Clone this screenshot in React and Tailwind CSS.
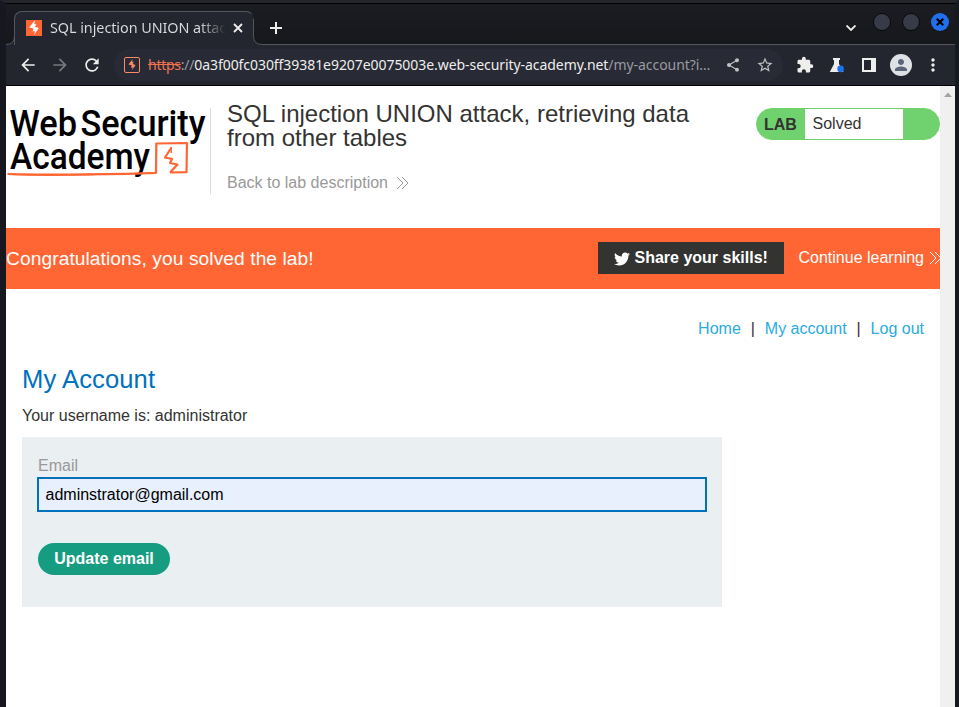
import React from "react";
import { MdArrowBack, MdArrowForward, MdRefresh, MdShare, MdStarBorder, MdExtension, MdMoreVert, MdPerson } from "react-icons/md";
import { FaTwitter } from "react-icons/fa";

function Bolt({ className }) {
  return (
    <svg viewBox="0 0 16 16" className={className} fill="currentColor">
      <path d="M8.8 0.2 L3.2 7.4 L7.6 8.4 L6.6 11.2 L9.2 11.6 L7.6 15.6 L12.8 8 L8.8 6.8 L10.4 4.6 L8.4 4 Z" />
    </svg>
  );
}

function Chevrons({ className }) {
  return (
    <svg viewBox="0 0 13 14" className={className} fill="none" stroke="currentColor" strokeWidth="1">
      <path d="M1 1 L7 7 L1 13 M6 1 L12 7 L6 13" />
    </svg>
  );
}

function WindowButton() {
  return <div className="h-[18px] w-[18px] rounded-full border border-[#08090c] bg-[#373b48]" />;
}

function TabStrip() {
  return (
    <div className="flex h-[42px] items-end border-t border-black bg-linear-to-b from-[#1c1d22] to-[#16171b] font-['Noto_Sans',sans-serif]">
      <svg viewBox="0 0 9 34" className="h-[34px] w-[9px] shrink-0 self-end">
        <path d="M0 33.5 Q8.5 33.5 8.5 25 H9 V34 H0 Z" fill="#24262f" />
        <path d="M0 33.5 Q8.5 33.5 8.5 25 V0" fill="none" stroke="#55575e" />
        <path d="M8.5 0 V8" stroke="#191a1f" />
      </svg>
      <div className="-ml-px flex h-[34px] w-[240px] shrink-0 items-center rounded-t-[8px] border border-b-0 border-[#55575e] bg-[#24262f] pr-[10px] pl-[11px] [border-right-color:transparent]">
        <div className="mb-px flex h-4 w-4 shrink-0 items-center justify-center bg-[#ff6633]">
          <Bolt className="h-4 w-4 text-white" />
        </div>
        <div className="mb-[1px] ml-2 w-[176px] overflow-hidden bg-linear-to-r from-[#dcdde0] from-85% to-transparent bg-clip-text text-[14.4px] leading-5 tracking-[-0.06px] whitespace-nowrap text-transparent">
          SQL injection UNION attack
        </div>
        <svg viewBox="0 0 10 10" className="mb-px ml-[7px] h-[10px] w-[10px] shrink-0 stroke-[#eeeeec]" strokeWidth="1.8">
          <path d="M1 1 L9 9 M9 1 L1 9" />
        </svg>
      </div>
      <svg viewBox="0 0 9 34" className="-ml-px h-[34px] w-[9px] shrink-0 self-end">
        <path d="M0 8 V34 H9 V33.5 Q0.5 33.5 0.5 25 Z" fill="#24262f" />
        <path d="M9 33.5 Q0.5 33.5 0.5 25 V8" fill="none" stroke="#55575e" />
      </svg>
      <div className="flex h-[41px] grow flex-col border-b border-[#55575e]">
        <div className="flex h-10 items-center pr-[6px]">
          <svg viewBox="0 0 12 12" className="mt-[8px] ml-[8px] h-3 w-3 stroke-[#eeeeec]" strokeWidth="2">
            <path d="M6 0 V12 M0 6 H12" />
          </svg>
          <svg viewBox="0 0 10 6" className="mt-[8px] mr-[17px] ml-auto h-[6px] w-[10px] fill-none stroke-[#eeeeec]" strokeWidth="1.8">
            <path d="M0.5 0.5 L5 5 L9.5 0.5" />
          </svg>
          <div className="mb-1 flex items-center gap-[11px]">
            <WindowButton />
            <WindowButton />
            <div className="flex h-[18px] w-[18px] items-center justify-center rounded-full bg-[#2070ee]">
              <svg viewBox="0 0 10 10" className="h-2 w-2 stroke-black" strokeWidth="2.8">
                <path d="M1 1 L9 9 M9 1 L1 9" />
              </svg>
            </div>
          </div>
        </div>
      </div>
    </div>
  );
}

function Toolbar() {
  return (
    <div className="flex h-[41px] items-center border-b border-black bg-[#24262f] pl-[12px] font-['Noto_Sans',sans-serif] text-[#eeeeec]">
      <MdArrowBack className="h-5 w-5 shrink-0" />
      <MdArrowForward className="ml-3 h-5 w-5 shrink-0 text-[#777980]" />
      <MdRefresh className="ml-3 h-5 w-5 shrink-0" />
      <div className="ml-3 flex h-8 w-[669px] shrink-0 items-center rounded-full bg-[#282a35] pl-[10px]">
        <div className="flex h-4 w-4 shrink-0 items-center justify-center rounded-[2px] border-[1.5px] border-[#ff8a65] text-[#ff8a65]">
          <Bolt className="h-3 w-3" />
        </div>
        <div className="mb-px ml-2 flex w-[564px] shrink-0 text-[14px] leading-5 tracking-[-0.06px] whitespace-nowrap">
          <span className="tracking-[-0.25px] text-[#f0734d] line-through">https</span>
          <span className="tracking-[-0.25px] text-[#999ba0]">://</span>
          <span className="text-[#eeeeec]">0a3f00fc030ff39381e9207e0075003e.web-security-academy.net</span>
          <span className="text-[#999ba0]">/my-account?i…</span>
        </div>
        <MdShare className="ml-[13px] h-4 w-4 shrink-0 text-[#c0c1c3]" />
        <MdStarBorder className="ml-[15px] h-[18px] w-[18px] shrink-0 text-[#c0c1c3]" />
      </div>
      <MdExtension className="ml-[13px] h-[18px] w-[18px] shrink-0" />
      <svg viewBox="0 0 16 16" className="ml-[15px] h-4 w-4 shrink-0">
        <path d="M4 1 H11 V3 H10 V7 L14.5 15 H0.8 L5 7 V3 H4 Z" fill="#eeeeec" />
        <circle cx="11.6" cy="11.9" r="3.3" fill="#1a73e8" />
      </svg>
      <svg viewBox="0 0 14 14" className="ml-[17px] h-[14px] w-[14px] shrink-0 fill-[#eeeeec]">
        <path d="M0 0 H14 V14 H0 Z M2 2 V12 H9 V2 Z" fillRule="evenodd" />
      </svg>
      <div className="ml-[14px] flex h-[22px] w-[22px] shrink-0 items-center justify-center rounded-full bg-[#dee1e6] text-[#5b6478]">
        <MdPerson className="h-[18px] w-[18px]" />
      </div>
      <MdMoreVert className="ml-[11px] h-5 w-5 shrink-0" />
    </div>
  );
}

function Logo() {
  return (
    <svg viewBox="0 0 204 86" className="h-[86px] w-[204px] shrink-0 overflow-visible">
      <g fontFamily="Roboto, sans-serif" fontWeight="500" fontSize="37.5" fill="#000">
        <text x="3.5" y="28.3" textLength="67.5" lengthAdjust="spacingAndGlyphs">Web</text>
        <text x="74.5" y="28.3" textLength="125" lengthAdjust="spacingAndGlyphs">Security</text>
        <text x="4" y="60.7" textLength="140" lengthAdjust="spacingAndGlyphs">Academy</text>
      </g>
      <g fill="none" stroke="#ff6633" strokeLinejoin="round">
        <path d="M1.5 66 Q35 66.8 80 66.3 T150 64.8 L150.3 35.5 L181 35 L180.5 64.2 L164 64.5" strokeWidth="2.2" />
        <path d="M2 66.2 Q40 68.3 88 66.5" strokeWidth="1.4" />
        <path d="M165.5 39.5 L159 49.5 L166 51 L164 55 L171.5 56.5 L164 64.5" strokeWidth="2.2" />
        <path d="M165.2 39 V45" strokeWidth="1.4" />
      </g>
    </svg>
  );
}

function LabHeader() {
  return (
    <header className="flex h-[142px] pt-[22px] text-[#333332]">
      <Logo />
      <div className="h-[86px] border-l border-[#dcdcdc] pl-4">
        <h2 className="-mt-[6px] w-[480px] text-[24px] leading-6">SQL injection UNION attack, retrieving data from other tables</h2>
        <a className="mt-[21px] flex items-center text-[16px] leading-6 text-[#999999]">
          Back to lab description
          <Chevrons className="mb-px ml-2 h-[14px] w-[13px]" />
        </a>
      </div>
      <div className="ml-auto flex h-8 w-[184px] overflow-hidden rounded-full border border-[#70d26f] bg-[#70d26f] text-[16px] leading-[30px]">
        <span className="w-[48px] pt-px pl-[7px] font-bold">LAB</span>
        <span className="w-[98px] bg-white pl-[7.5px]">Solved</span>
      </div>
    </header>
  );
}

function SolvedBanner() {
  return (
    <section className="flex h-[61px] items-center bg-[#ff6633] text-white">
      <h4 className="text-[19.2px] leading-6 tracking-[0.075px]">Congratulations, you solved the lab!</h4>
      <a className="mb-px ml-auto flex h-8 w-[186px] items-center bg-[#333332] pl-4 text-[16px] font-bold">
        <FaTwitter className="mt-[2px] mr-[4.5px] h-4 w-4" />
        Share your skills!
      </a>
      <a className="mb-[2px] flex w-[156px] items-center pl-[14.5px] text-[16px] whitespace-nowrap">
        Continue learning
        <Chevrons className="mt-px ml-[5px] h-[14px] w-[13px] shrink-0" />
      </a>
    </section>
  );
}

function Account() {
  return (
    <main className="px-4 pt-7 text-[16px] text-[#333332]">
      <nav className="flex h-6 items-center justify-end text-[#29abe2]">
        <a>Home</a>
        <span className="w-[24px] text-center text-[#3d2a30]">|</span>
        <a>My account</a>
        <span className="w-[24px] text-center text-[#3d2a30]">|</span>
        <a>Log out</a>
      </nav>
      <h1 className="mt-[22px] text-[25.6px] leading-8 tracking-[0.08px] text-[#0071bc]">My Account</h1>
      <p className="mt-[9px] leading-6">Your username is: administrator</p>
      <form className="mt-[9px] flex h-[170px] w-[700px] flex-col items-start bg-[#eaeff2] px-[15px] pt-[17px]">
        <label className="ml-px h-[23px] leading-6 text-[#999999]">Email</label>
        <div className="h-[35px] w-[670px] border-2 border-[#0071bc] bg-[#e8f0fe] pl-[6.5px] leading-[31px] text-black">adminstrator@gmail.com</div>
        <button type="button" className="mt-[31px] ml-px h-8 w-[132px] rounded-full bg-[#169c80] font-bold text-white">Update email</button>
      </form>
    </main>
  );
}

export default function App() {
  return (
    <div className="flex h-[707px] w-[959px] flex-col overflow-hidden border-t-[3px] border-r-4 border-l-[6px] border-t-[#24262c] border-r-[#151920] border-l-[#16171f]">
      <TabStrip />
      <Toolbar />
      <div className="flex min-h-0 grow bg-white font-['Liberation_Sans',Arial,sans-serif]">
        <div className="w-[934px] overflow-x-hidden">
          <LabHeader />
          <SolvedBanner />
          <Account />
        </div>
        <div className="flex w-[15px] justify-center bg-[#f0f0f0] pt-[6px]">
          <svg viewBox="0 0 8 5" className="h-[5px] w-[8px] fill-[#a3a3a3]">
            <path d="M0 5 L4 0.5 L8 5 Z" />
          </svg>
        </div>
      </div>
    </div>
  );
}
